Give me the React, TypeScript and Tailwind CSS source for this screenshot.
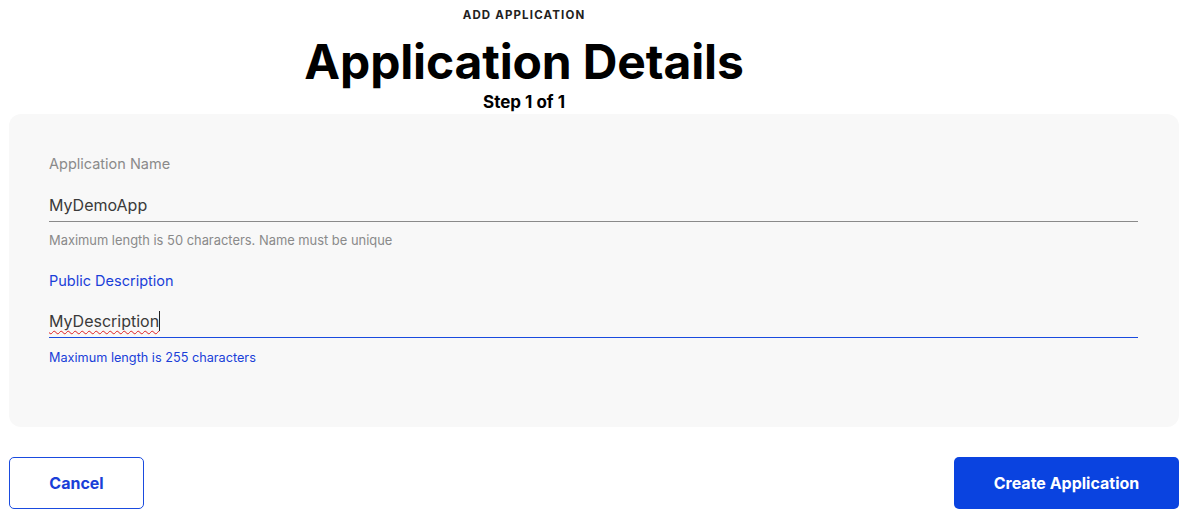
import React from "react";

export default function App() {
  const font = { fontFamily: "Inter, 'Noto Sans', sans-serif" };
  return (
    <div className="w-[1192px] h-[522px] bg-white overflow-hidden" style={font}>
      <div className="flex flex-col items-center pr-[144px] pt-[8px]">
        <div className="text-[11.5px] font-bold tracking-[0.1em] text-[#222] leading-[14px]">ADD APPLICATION</div>
        <div className="text-[48px] font-bold text-black leading-[56px] mt-[12px] tracking-[-0.003em]">Application Details</div>
        <div className="text-[17px] font-bold text-black leading-[20px] mt-[2px]">Step 1 of 1</div>
      </div>
      <div className="ml-[9px] mr-[13px] mt-[2px] h-[313px] rounded-[12px] bg-[#f8f8f8] pl-[40px] pr-[41px] pt-[41px]">
        <div className="text-[14.5px] text-[#8a8a8a] leading-[18px]">Application Name</div>
        <div className="mt-[22px] border-b border-[#8a8a8a] pb-[6px] text-[16px] text-[#3a3a3a] leading-[20px]">MyDemoApp</div>
        <div className="mt-[11px] text-[12.9px] text-[#8a8a8a] leading-[16px]">Maximum length is 50 characters. Name must be unique</div>
        <div className="mt-[23px] text-[14.5px] text-[#1a3fd8] leading-[18px]">Public Description</div>
        <div className="mt-[21px] border-b border-[#1a4bdf] pb-[6px] text-[16px] text-[#3a3a3a] leading-[20px] flex items-center">
          <span className="underline decoration-wavy decoration-[#e02020] decoration-1 underline-offset-[3px]">MyDescription</span>
          <span className="inline-block w-[1px] h-[20px] bg-[#222]"></span>
        </div>
        <div className="mt-[12px] text-[12.7px] text-[#1a3fd8] leading-[16px]">Maximum length is 255 characters</div>
      </div>
      <div className="flex justify-between pl-[9px] pr-[13px] mt-[30px]">
        <button className="w-[135px] h-[52px] rounded-[5px] border border-[#1a4bdf] bg-white text-[16px] font-bold text-[#1a3fd8]">Cancel</button>
        <button className="w-[225px] h-[52px] rounded-[5px] bg-[#0a43e0] text-[16px] font-bold text-white">Create Application</button>
      </div>
    </div>
  );
}
